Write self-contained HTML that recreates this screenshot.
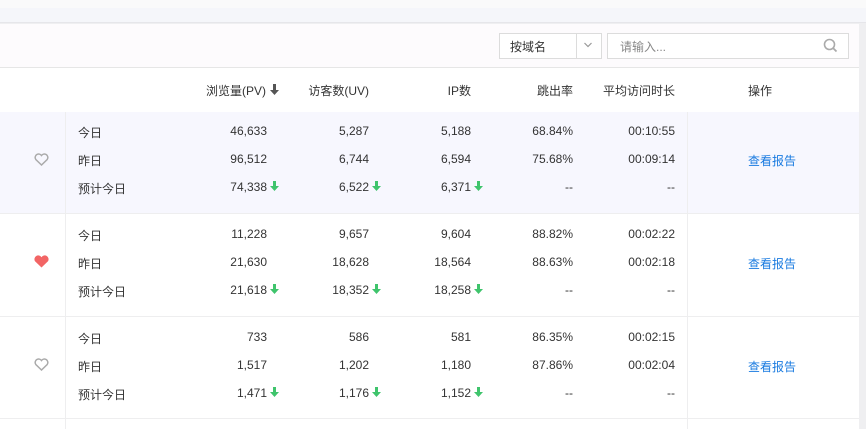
<!DOCTYPE html><html><head><meta charset="utf-8"><style>
*{margin:0;padding:0;box-sizing:border-box}
body{width:866px;height:429px;overflow:hidden;background:#efeff1;font-family:"Liberation Sans","Noto Sans CJK SC",sans-serif;font-size:12px;color:#333;position:relative}
.a{position:absolute}
.r{text-align:right}
</style></head><body>
<div class="a" style="left:0;top:0;width:866px;height:8px;background:#fafafa"></div>
<div class="a" style="left:0;top:8px;width:866px;height:15px;background:#f5f6fa;border-bottom:1px solid #e6e6ea"></div>
<div class="a" style="left:0;top:24px;width:859px;height:405px;background:#fff"></div>
<div class="a" style="left:0;top:24px;width:859px;height:44px;background:#fdfbfd;border-bottom:1px solid #e6e6e6"></div>
<div class="a" style="left:499px;top:33px;width:103px;height:26px;border:1px solid #dcdcdc;background:#fff"></div>
<div class="a" style="left:576px;top:34px;width:1px;height:24px;background:#dcdcdc"></div>
<div class="a" style="left:510px;top:38px;font-size:12px;color:#333">按域名</div>
<svg class="a" style="left:583px;top:41px" width="10" height="8"><path d="M1.5 2l3.5 3.5L8.5 2" fill="none" stroke="#999" stroke-width="1.2"/></svg>
<div class="a" style="left:607px;top:33px;width:242px;height:26px;border:1px solid #dcdcdc;background:#fff"></div>
<div class="a" style="left:620px;top:38px;color:#888">请输入...</div>
<svg class="a" style="left:823px;top:38px" width="15" height="15"><circle cx="6.5" cy="6.5" r="5" fill="none" stroke="#aaa" stroke-width="1.6"/><path d="M10 10l3.5 3.5" stroke="#aaa" stroke-width="1.8"/></svg>

<div class="a" style="left:0;top:69px;width:859px;height:43px;color:#333">
<div class="a r" style="left:160px;width:106px;top:13px">浏览量(PV)</div>
<svg class="a" style="left:270px;top:15px" width="9" height="11"><path d="M3 0h3v6h3L4.5 11 0 6h3z" fill="#555"/></svg>
<div class="a r" style="left:270px;width:99px;top:13px">访客数(UV)</div>
<div class="a r" style="left:380px;width:91px;top:13px">IP数</div>
<div class="a r" style="left:480px;width:93px;top:13px">跳出率</div>
<div class="a r" style="left:580px;width:95px;top:13px">平均访问时长</div>
<div class="a" style="left:748px;top:13px">操作</div>
</div>

<div class="a" style="left:0;top:112px;width:859px;height:102px;background:#f7f7fe;border-bottom:1px solid #eeeeef"></div>
<div class="a" style="left:0;top:214px;width:859px;height:103px;border-bottom:1px solid #eeeeef"></div>
<div class="a" style="left:0;top:317px;width:859px;height:102px;border-bottom:1px solid #eeeeef"></div>
<div class="a" style="left:65px;top:112px;width:1px;height:317px;background:#eeeeef"></div>
<div class="a" style="left:687px;top:112px;width:1px;height:317px;background:#eeeeef"></div>

<svg class="a" style="left:34px;top:153px" width="15" height="13"><path d="M7.5 12L1.8 6.5A3.2 3.2 0 0 1 7.5 2.5 3.2 3.2 0 0 1 13.2 6.5z" fill="none" stroke="#aaa" stroke-width="1.5"/></svg>
<svg class="a" style="left:34px;top:255px" width="15" height="13"><path d="M7.5 12.5L1 6.2A3.5 3.5 0 0 1 7.5 2.2 3.5 3.5 0 0 1 14 6.2z" fill="#f26565"/></svg>
<svg class="a" style="left:34px;top:358px" width="15" height="13"><path d="M7.5 12L1.8 6.5A3.2 3.2 0 0 1 7.5 2.5 3.2 3.2 0 0 1 13.2 6.5z" fill="none" stroke="#aaa" stroke-width="1.5"/></svg>

<div id="rows"></div>
<script>
var data=[
[["46,633","5,287","5,188","68.84%","00:10:55"],["96,512","6,744","6,594","75.68%","00:09:14"],["74,338","6,522","6,371","--","--"]],
[["11,228","9,657","9,604","88.82%","00:02:22"],["21,630","18,628","18,564","88.63%","00:02:18"],["21,618","18,352","18,258","--","--"]],
[["733","586","581","86.35%","00:02:15"],["1,517","1,202","1,180","87.86%","00:02:04"],["1,471","1,176","1,152","--","--"]]];
var labels=["今日","昨日","预计今日"],ends=[267,369,471,573,675],h="";
data.forEach(function(g,gi){var top=112+gi*103;
g.forEach(function(r,ri){var y=top+12+ri*28;
h+='<div class="a" style="left:78px;top:'+y+'px">'+labels[ri]+'</div>';
r.forEach(function(v,ci){h+='<div class="a r" style="left:'+(ends[ci]-100)+'px;width:100px;top:'+y+'px">'+v+'</div>';
if(ri==2&&ci<3)h+='<svg class="a" style="left:'+(ends[ci]+3)+'px;top:'+(y+1)+'px" width="9" height="10"><path d="M3 0h3v5h3L4.5 10 0 5h3z" fill="#3fc46c"/></svg>';});});
h+='<div class="a" style="left:748px;top:'+(top+40)+'px;color:#1a7be0">查看报告</div>';});
document.getElementById("rows").innerHTML=h;
</script>
</body></html>
